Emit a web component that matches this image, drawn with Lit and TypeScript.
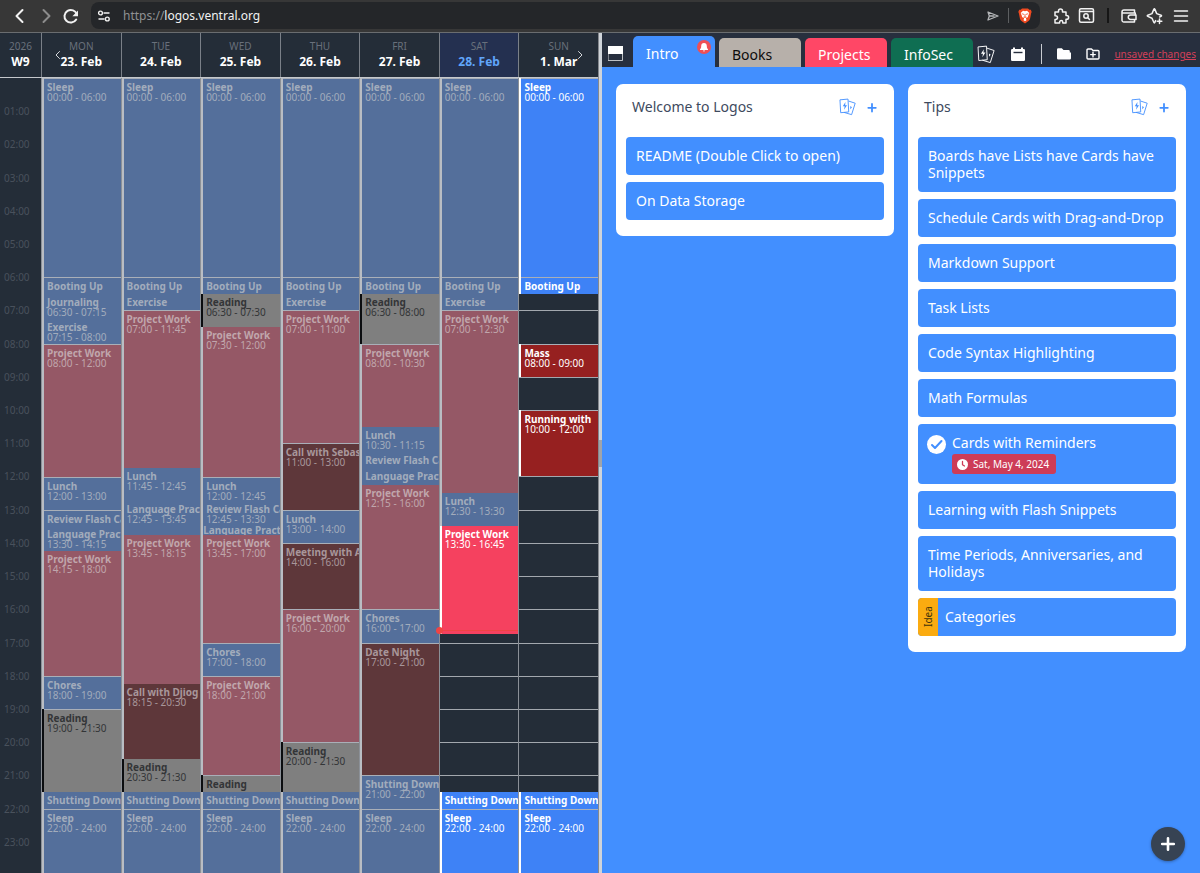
import { LitElement, html, css, svg, nothing } from "lit";
import { customElement, property, state } from "lit/decorators.js";
import { classMap } from "lit/directives/class-map.js";
import { styleMap } from "lit/directives/style-map.js";

type Kind = "routine" | "project" | "reading" | "social";

interface CalendarEvent {
  title: string;
  from: string;
  to: string;
  kind: Kind;
  upcoming?: boolean;
}

interface Day {
  weekday: string;
  date: string;
  today?: boolean;
  events: CalendarEvent[];
}

interface Card {
  title: string;
  reminder?: string;
  category?: string;
}

const ev = (title: string, from: string, to: string, kind: Kind = "routine", upcoming = false): CalendarEvent => ({
  title,
  from,
  to,
  kind,
  upcoming,
});

const WEEK: Day[] = [
  {
    weekday: "MON",
    date: "23. Feb",
    events: [
      ev("Sleep", "00:00", "06:00"),
      ev("Booting Up", "06:00", "06:30"),
      ev("Journaling", "06:30", "07:15"),
      ev("Exercise", "07:15", "08:00"),
      ev("Project Work", "08:00", "12:00", "project"),
      ev("Lunch", "12:00", "13:00"),
      ev("Review Flash Cards", "13:00", "13:30"),
      ev("Language Practice", "13:30", "14:15"),
      ev("Project Work", "14:15", "18:00", "project"),
      ev("Chores", "18:00", "19:00"),
      ev("Reading", "19:00", "21:30", "reading"),
      ev("Shutting Down", "21:30", "22:00"),
      ev("Sleep", "22:00", "24:00"),
    ],
  },
  {
    weekday: "TUE",
    date: "24. Feb",
    events: [
      ev("Sleep", "00:00", "06:00"),
      ev("Booting Up", "06:00", "06:30"),
      ev("Exercise", "06:30", "07:00"),
      ev("Project Work", "07:00", "11:45", "project"),
      ev("Lunch", "11:45", "12:45"),
      ev("Language Practice", "12:45", "13:45"),
      ev("Project Work", "13:45", "18:15", "project"),
      ev("Call with Djiog", "18:15", "20:30", "social"),
      ev("Reading", "20:30", "21:30", "reading"),
      ev("Shutting Down", "21:30", "22:00"),
      ev("Sleep", "22:00", "24:00"),
    ],
  },
  {
    weekday: "WED",
    date: "25. Feb",
    events: [
      ev("Sleep", "00:00", "06:00"),
      ev("Booting Up", "06:00", "06:30"),
      ev("Reading", "06:30", "07:30", "reading"),
      ev("Project Work", "07:30", "12:00", "project"),
      ev("Lunch", "12:00", "12:45"),
      ev("Review Flash Cards", "12:45", "13:30"),
      ev("Language Practice", "13:30", "13:45"),
      ev("Project Work", "13:45", "17:00", "project"),
      ev("Chores", "17:00", "18:00"),
      ev("Project Work", "18:00", "21:00", "project"),
      ev("Reading", "21:00", "21:30", "reading"),
      ev("Shutting Down", "21:30", "22:00"),
      ev("Sleep", "22:00", "24:00"),
    ],
  },
  {
    weekday: "THU",
    date: "26. Feb",
    events: [
      ev("Sleep", "00:00", "06:00"),
      ev("Booting Up", "06:00", "06:30"),
      ev("Exercise", "06:30", "07:00"),
      ev("Project Work", "07:00", "11:00", "project"),
      ev("Call with Sebas", "11:00", "13:00", "social"),
      ev("Lunch", "13:00", "14:00"),
      ev("Meeting with A", "14:00", "16:00", "social"),
      ev("Project Work", "16:00", "20:00", "project"),
      ev("Reading", "20:00", "21:30", "reading"),
      ev("Shutting Down", "21:30", "22:00"),
      ev("Sleep", "22:00", "24:00"),
    ],
  },
  {
    weekday: "FRI",
    date: "27. Feb",
    events: [
      ev("Sleep", "00:00", "06:00"),
      ev("Booting Up", "06:00", "06:30"),
      ev("Reading", "06:30", "08:00", "reading"),
      ev("Project Work", "08:00", "10:30", "project"),
      ev("Lunch", "10:30", "11:15"),
      ev("Review Flash Cards", "11:15", "11:45"),
      ev("Language Practice", "11:45", "12:15"),
      ev("Project Work", "12:15", "16:00", "project"),
      ev("Chores", "16:00", "17:00"),
      ev("Date Night", "17:00", "21:00", "social"),
      ev("Shutting Down", "21:00", "22:00"),
      ev("Sleep", "22:00", "24:00"),
    ],
  },
  {
    weekday: "SAT",
    date: "28. Feb",
    today: true,
    events: [
      ev("Sleep", "00:00", "06:00"),
      ev("Booting Up", "06:00", "06:30"),
      ev("Exercise", "06:30", "07:00"),
      ev("Project Work", "07:00", "12:30", "project"),
      ev("Lunch", "12:30", "13:30"),
      ev("Project Work", "13:30", "16:45", "project", true),
      ev("Shutting Down", "21:30", "22:00", "routine", true),
      ev("Sleep", "22:00", "24:00", "routine", true),
    ],
  },
  {
    weekday: "SUN",
    date: "1. Mar",
    events: [
      ev("Sleep", "00:00", "06:00", "routine", true),
      ev("Booting Up", "06:00", "06:30", "routine", true),
      ev("Mass", "08:00", "09:00", "social", true),
      ev("Running with", "10:00", "12:00", "social", true),
      ev("Shutting Down", "21:30", "22:00", "routine", true),
      ev("Sleep", "22:00", "24:00", "routine", true),
    ],
  },
];

const LISTS: { title: string; cards: Card[] }[] = [
  {
    title: "Welcome to Logos",
    cards: [{ title: "README (Double Click to open)" }, { title: "On Data Storage" }],
  },
  {
    title: "Tips",
    cards: [
      { title: "Boards have Lists have Cards have Snippets" },
      { title: "Schedule Cards with Drag-and-Drop" },
      { title: "Markdown Support" },
      { title: "Task Lists" },
      { title: "Code Syntax Highlighting" },
      { title: "Math Formulas" },
      { title: "Cards with Reminders", reminder: "Sat, May 4, 2024" },
      { title: "Learning with Flash Snippets" },
      { title: "Time Periods, Anniversaries, and Holidays" },
      { title: "Categories", category: "Idea" },
    ],
  },
];

/** Index of the quarter-hour grid line for a "HH:MM" time. */
const quarterLine = (time: string): number => {
  const [h, m] = time.split(":").map(Number);
  return h * 4 + m / 15 + 1;
};

const flashCards = svg`
  <path d="M1.5 2l8.500-.8.8 14.300-8.500.8z"/>
  <path d="M11 3.500l7 2.300-4 12.700-8-2.400"/>
  <path class="solid" d="M7.200 4.400L4.200 9.300h2.100l-.7 3.700 3.300-5H6.800z"/>
  <path class="solid" d="M12.600 9l1.800 1.200-1.800 2.200z"/>`;

const reset = css`
  * {
    box-sizing: border-box;
  }
  button,
  input {
    font: inherit;
    color: inherit;
    background: none;
    border: 0;
    margin: 0;
    padding: 0;
  }
  button {
    display: flex;
    align-items: center;
    justify-content: center;
    cursor: pointer;
  }
  svg {
    display: block;
    fill: none;
    stroke: currentColor;
    stroke-linecap: round;
    stroke-linejoin: round;
  }
  .solid {
    fill: currentColor;
    stroke: none;
  }
`;

@customElement("browser-bar")
class BrowserBar extends LitElement {
  static styles = [
    reset,
    css`
      :host {
        display: grid;
        grid-template-columns: auto minmax(0, 1fr) auto;
        align-items: center;
        padding: 2px 10px 4px 10px;
        background: #373737;
        border-bottom: 1px solid #6a6d70;
        color: #f2f2f2;
      }
      .nav {
        display: flex;
        gap: 6px;
        margin-right: 11px;
      }
      .nav svg {
        stroke-width: 2;
      }
      .dim {
        color: #8c8c8c;
      }
      .address {
        display: flex;
        align-items: center;
        height: 27px;
        padding: 0 8px 0 5px;
        border-radius: 8px;
        background: #242629;
        font-size: 12px;
      }
      .address label {
        margin-left: 11px;
        color: #8f9193;
      }
      .address input {
        flex: 1;
        min-width: 0;
        outline: none;
      }
      .share {
        color: #b4b6b8;
      }
      .rule {
        width: 1px;
        height: 15px;
        margin: 0 9px 0 8px;
        background: #5d5f61;
      }
      .tools {
        display: flex;
        align-items: center;
        gap: 8px;
        margin-left: 12px;
      }
      .tools .rule {
        width: 2px;
        margin: 0 3px 0 4px;
        background: #161616;
      }
      .tools svg {
        stroke-width: 1.5;
      }
    `,
  ];

  render() {
    return html`
      <div class="nav">
        <button aria-label="Back">
          <svg width="20" height="20" viewBox="0 0 20 20"><path d="M12.5 4L6.500 10l6 6" /></svg>
        </button>
        <button class="dim" aria-label="Forward">
          <svg width="20" height="20" viewBox="0 0 20 20"><path d="M7.500 4l6 6-6 6" /></svg>
        </button>
        <button aria-label="Reload">
          <svg width="18" height="18" viewBox="0 0 18 18">
            <path d="M14.800 7.500A6.300 6.300 0 1 0 14.200 12.500" />
            <path class="solid" d="M16 3.500v5.800h-5.600z" />
          </svg>
        </button>
      </div>
      <div class="address">
        <button aria-label="Site settings">
          <svg width="16" height="16" viewBox="0 0 16 16" stroke-width="1.400">
            <circle cx="4.500" cy="5" r="1.900" /><path d="M8 5h5M3 11h5" /><circle cx="11.300" cy="11" r="1.900" />
          </svg>
        </button>
        <label for="url">https://</label>
        <input id="url" type="text" .value=${"logos.ventral.org"} />
        <button aria-label="Share" class="share">
          <svg width="14" height="14" viewBox="0 0 14 14" stroke-width="1.300">
            <path d="M2 3l10 4-10 4 1.300-4zM3.300 7H8" />
          </svg>
        </button>
        <span class="rule"></span>
        <button aria-label="Shields">
          <svg width="14" height="16" viewBox="0 0 14 16">
            <path
              fill="#f04a20"
              stroke="none"
              d="M4 .5h6l1.300 1.300 1.500-.1.900 2.200-.5 1.200L12 11c-.3 1-1 1.600-1.800 2.200L7 15.500l-3.200-2.300C3 12.600 2.300 12 2 11L.8 5.100.3 3.900l.9-2.200 1.500.1z"
            />
            <path
              fill="#fff"
              stroke="none"
              d="M7 3.200l2-.5L11.300 5l-1.200 3-.1 1-2 1.200v1l.7.700L7 13.200l-1.700-1.300.7-.7v-1L4 9l-.1-1-1.200-3L5 2.700z"
            />
            <path stroke="#f04a20" stroke-width=".8" d="M4.200 5.800l1.800.6M9.800 5.800L8 6.400M7 7v2.200M5.800 9.200h2.400" />
          </svg>
        </button>
      </div>
      <div class="tools">
        <button aria-label="Extensions">
          <svg width="18" height="18" viewBox="0 0 18 18">
            <path
              d="M3 5h3.500V4a2 2 0 0 1 4 0v1H14v3.500h.7a1.900 1.900 0 0 1 0 3.800H14V16h-3.200v-.8a1.600 1.600 0 0 0-3.200 0v.8H3v-3.500h.6a1.900 1.900 0 0 0 0-3.800H3z"
            />
          </svg>
        </button>
        <button aria-label="Search tabs">
          <svg width="17" height="17" viewBox="0 0 17 17">
            <rect x="1.500" y="1.800" width="14" height="13.400" rx="1.500" />
            <path d="M2 4.500h13" /><circle cx="8" cy="9" r="2.200" /><path d="M9.800 10.800l1.700 1.700" />
          </svg>
        </button>
        <span class="rule"></span>
        <button aria-label="Wallet">
          <svg width="18" height="18" viewBox="0 0 18 18">
            <path d="M14.500 6V3H4a2 2 0 0 0-2 2v8.500A1.700 1.700 0 0 0 3.700 15h10.800v-2M2.500 6h12.800v2" />
            <path d="M10.500 8H16v4.500h-5.500a2.200 2.200 0 0 1 0-4.500z" />
          </svg>
        </button>
        <button aria-label="Assistant">
          <svg width="18" height="18" viewBox="0 0 18 18">
            <path
              d="M13.600 10l1.400-.6c.7-.3.700-.8 0-1.100L10.700 6.600 8.900 2.400c-.3-.8-.8-.8-1.100 0L6 6.600 1.800 8.300c-.7.300-.7.800 0 1.100L6 11.200l1.800 4.100c.3.800.8.800 1.100 0l.7-1.700M13.500 12v4.500M11.300 14.200h4.500"
            />
          </svg>
        </button>
        <button aria-label="Menu">
          <svg width="18" height="18" viewBox="0 0 18 18"><path d="M2.500 4h13M2.500 9h13M2.500 14h13" /></svg>
        </button>
      </div>
    `;
  }
}

@customElement("week-calendar")
class WeekCalendar extends LitElement {
  @property({ attribute: false }) days: Day[] = [];
  @property() now = "16:30";

  static styles = [
    reset,
    css`
      :host {
        display: block;
        position: relative;
        min-width: 0;
        overflow: hidden;
        background: #242d38;
        font-size: 10px;
      }
      .week {
        display: grid;
        grid-template-columns: 41px repeat(7, minmax(0, 1fr));
      }
      .head {
        border-bottom: 1px solid #c5c8cc;
      }
      .head > div {
        display: flex;
        flex-direction: column;
        align-items: center;
        height: 44px;
        padding-top: 6px;
        border-left: 1px solid #7a8088;
        line-height: 15px;
        color: #69707b;
      }
      .head > div:first-child {
        border-left: 0;
      }
      .head strong {
        font-size: 12px;
        line-height: 15px;
        color: #fff;
      }
      .head .today {
        background: #243050;
      }
      .head .today strong {
        color: #60a5fa;
      }
      .step {
        position: absolute;
        top: 14px;
        width: 16px;
        height: 16px;
        color: #d5d8dc;
      }
      .prev {
        left: 50px;
      }
      .next {
        right: 10px;
      }
      .body {
        height: calc(100vh - 76px);
      }
      .axis,
      .day,
      .lines {
        display: grid;
        min-height: 0;
        grid-template-rows: repeat(96, minmax(0, 1fr));
      }
      .axis span {
        align-self: center;
        padding-left: 4px;
        line-height: 12px;
        color: #49515c;
      }
      .day {
        grid-template-columns: minmax(0, 1fr);
        border-left: 1px solid #8b9097;
      }
      .lines {
        grid-area: 1 / 1 / -1 / -1;
        grid-template-rows: repeat(24, minmax(0, 1fr));
      }
      .lines i {
        box-shadow: inset 0 1px #a3a8ae;
      }
      .lines i:first-child {
        box-shadow: none;
      }
      .event {
        grid-column: 1;
        min-height: 0;
        overflow: hidden;
        padding: 3px 0 0 3px;
        border-left: 2px solid #b9bdc3;
        line-height: 10px;
        white-space: nowrap;
        color: #a2acbc;
      }
      .event b,
      .event time {
        display: block;
      }
      .on-hour {
        padding-top: 4px;
        box-shadow: inset 0 1px #a9afb8;
      }
      .tiny {
        padding: 0;
        line-height: 8px;
      }
      .routine {
        background: #546f9b;
      }
      .project {
        background: #955866;
        color: #c0a6ac;
      }
      .social {
        background: #5e373a;
        color: #a8969a;
      }
      .reading {
        background: #7f7f7f;
        border-color: #0b0d10;
        color: #333537;
      }
      .upcoming {
        border-color: #fff;
        color: #fff;
      }
      .upcoming.routine {
        background: #3e82f6;
      }
      .upcoming.project {
        background: #f5415f;
      }
      .upcoming.social {
        background: #962020;
      }
      .now {
        grid-column: 1;
        align-self: center;
        position: relative;
        height: 1px;
        background: #ef4444;
      }
      .now::before {
        content: "";
        position: absolute;
        left: -4px;
        top: -3px;
        width: 7px;
        height: 7px;
        border-radius: 50%;
        background: #ef4444;
      }
    `,
  ];

  private renderEvent(e: CalendarEvent) {
    const start = quarterLine(e.from);
    const end = quarterLine(e.to);
    const length = end - start;
    const classes = {
      event: true,
      [e.kind]: true,
      upcoming: !!e.upcoming,
      "on-hour": e.from.endsWith(":00"),
      tiny: length === 1,
    };
    return html`<div class=${classMap(classes)} style=${styleMap({ gridRow: `${start} / ${end}` })}>
      <b>${e.title}</b>
      ${length > 2 ? html`<time>${e.from} - ${e.to}</time>` : nothing}
    </div>`;
  }

  render() {
    const hours = Array.from({ length: 24 }, (_, h) => h);
    return html`
      <div class="week head">
        <div><span>2026</span><strong>W9</strong></div>
        ${this.days.map(
          (d) => html`<div class=${classMap({ today: !!d.today })}>
            <span>${d.weekday}</span><strong>${d.date}</strong>
          </div>`
        )}
      </div>
      <button class="step prev" aria-label="Previous week">
        <svg width="8" height="10" viewBox="0 0 8 10"><path d="M5.500 1.500L2 5l3.500 3.500" /></svg>
      </button>
      <button class="step next" aria-label="Next week">
        <svg width="8" height="10" viewBox="0 0 8 10"><path d="M2.500 1.500L6 5 2.500 8.500" /></svg>
      </button>
      <div class="week body">
        <div class="axis">
          ${hours.slice(1).map(
            (h) => html`<span style=${styleMap({ gridRow: `${h * 4 - 1} / ${h * 4 + 3}` })}
              >${String(h).padStart(2, "0")}:00</span
            >`
          )}
        </div>
        ${this.days.map(
          (d) => html`<div class="day">
            <div class="lines">${hours.map(() => html`<i></i>`)}</div>
            ${d.events.map((e) => this.renderEvent(e))}
            ${d.today
              ? html`<div class="now" style=${styleMap({ gridRow: String(quarterLine(this.now)) })}></div>`
              : nothing}
          </div>`
        )}
      </div>
    `;
  }
}

@customElement("board-list")
class BoardList extends LitElement {
  @property() heading = "";
  @property({ attribute: false }) cards: Card[] = [];

  static styles = [
    reset,
    css`
      :host {
        display: block;
        flex: 1 1 0;
        min-width: 0;
        padding: 10px 10px 16px;
        border-radius: 7px;
        background: #fff;
      }
      header {
        display: flex;
        align-items: center;
        height: 26px;
        padding: 0 6px;
        margin-bottom: 17px;
        color: #428fff;
      }
      h2 {
        flex: 1;
        margin: 0;
        font-size: 14px;
        font-weight: 400;
        line-height: 20px;
        color: #3e4a5e;
      }
      header button + button {
        margin-left: 9px;
      }
      .cards {
        display: flex;
        flex-direction: column;
        gap: 7px;
        margin: 0;
        padding: 0;
        list-style: none;
      }
      .card {
        display: flex;
        border-radius: 4px;
        overflow: hidden;
        background: #428fff;
        color: #fff;
        font-size: 14px;
        line-height: 17px;
      }
      .content {
        flex: 1;
        padding: 10px 10px 11px;
      }
      .tag {
        display: flex;
        align-items: center;
        justify-content: center;
        width: 20px;
        writing-mode: vertical-rl;
        transform: rotate(180deg);
        background: #fbab10;
        color: #42330c;
        font-size: 10px;
      }
      .tag + .content {
        padding-left: 7px;
      }
      .check {
        display: grid;
        align-self: flex-start;
        margin: 11px 0 0 9px;
      }
      .check > * {
        grid-area: 1 / 1;
      }
      .check input {
        appearance: none;
        width: 19px;
        height: 19px;
        border-radius: 50%;
        background: #fff;
      }
      .check svg {
        stroke: #428fff;
        stroke-width: 2;
        pointer-events: none;
      }
      .check + .content {
        padding-left: 6px;
        padding-bottom: 10px;
      }
      .due {
        display: flex;
        align-items: center;
        gap: 5px;
        width: fit-content;
        height: 20px;
        margin-top: 3px;
        padding: 0 7px 0 5px;
        border-radius: 3px;
        background: #cd3c57;
        font-size: 10px;
      }
    `,
  ];

  private renderCard(card: Card) {
    return html`<li class="card">
      ${card.category ? html`<span class="tag">${card.category}</span>` : nothing}
      ${card.reminder
        ? html`<span class="check">
            <input type="checkbox" checked aria-label=${card.title} />
            <svg width="19" height="19" viewBox="0 0 19 19"><path d="M5 10l3 3 6.500-7" /></svg>
          </span>`
        : nothing}
      <div class="content">
        ${card.title}
        ${card.reminder
          ? html`<time class="due">
              <svg width="11" height="11" viewBox="0 0 11 11">
                <circle class="solid" cx="5.500" cy="5.500" r="5.500" />
                <path stroke="#cd3c57" stroke-width="1.300" d="M5.500 2.500v3.200l2 1.300" />
              </svg>
              ${card.reminder}
            </time>`
          : nothing}
      </div>
    </li>`;
  }

  render() {
    return html`
      <header>
        <h2>${this.heading}</h2>
        <button aria-label="Review flash snippets">
          <svg width="18" height="18" viewBox="0 0 20 20">${flashCards}</svg>
        </button>
        <button aria-label="Add card">
          <svg width="12" height="12" viewBox="0 0 12 12" stroke-width="1.800"><path d="M6 3v7.500M2.300 6.800h7.500" /></svg>
        </button>
      </header>
      <ul class="cards">
        ${this.cards.map((c) => this.renderCard(c))}
      </ul>
    `;
  }
}

@customElement("logos-board")
class LogosBoard extends LitElement {
  @state() private active = "Intro";

  static styles = [
    reset,
    css`
      :host {
        display: flex;
        flex-direction: column;
        position: relative;
        min-width: 0;
        overflow: hidden;
        background: #428fff;
      }
      .bar {
        display: flex;
        align-items: center;
        height: 34px;
        padding-left: 6px;
        background: #272f3e;
        color: #fff;
      }
      .layout {
        margin: 7px 10px 0 0;
      }
      .tabs {
        display: flex;
        align-items: flex-end;
        align-self: stretch;
        gap: 4px;
      }
      .tab {
        position: relative;
        justify-content: flex-start;
        width: 82px;
        height: 29px;
        padding: 3px 0 0 13px;
        border-radius: 5px 5px 0 0;
        font-size: 14px;
      }
      .intro {
        background: #428fff;
      }
      .active {
        height: 31px;
      }
      .books {
        background: #b7b0aa;
        color: #0c0c0c;
      }
      .projects {
        background: #ff4766;
      }
      .infosec {
        background: #0f6e52;
      }
      .bell {
        position: absolute;
        top: 4px;
        right: 4px;
        display: grid;
        place-items: center;
        width: 14px;
        height: 14px;
        border-radius: 50%;
        background: #f04f55;
      }
      .actions {
        display: flex;
        flex: 1;
        align-items: center;
        justify-content: space-between;
        margin: 8px 4px 0 4px;
      }
      .sep {
        width: 1px;
        height: 20px;
        background: #c9ccd1;
      }
      .status {
        font-size: 10px;
        line-height: 14px;
        white-space: nowrap;
        color: #d3405a;
      }
      .lists {
        display: flex;
        align-items: flex-start;
        gap: 14px;
        padding: 17px 14px;
      }
      .add {
        position: absolute;
        right: 15px;
        bottom: 12px;
        width: 34px;
        height: 34px;
        border-radius: 50%;
        background: #374353;
        color: #fff;
        box-shadow: 0 1px 3px rgba(0, 0, 0, 0.3);
      }
    `,
  ];

  render() {
    const tabs = ["Intro", "Books", "Projects", "InfoSec"];
    return html`
      <div class="bar">
        <button class="layout" aria-label="Toggle layout">
          <svg width="15" height="15" viewBox="0 0 15 15">
            <path d="M.5.5h14v14H.5z" stroke-opacity=".7" /><path class="solid" d="M0 0h15v8H0z" />
          </svg>
        </button>
        <nav class="tabs">
          ${tabs.map(
            (t) => html`<button
              class=${classMap({ tab: true, [t.toLowerCase()]: true, active: t === this.active })}
              @click=${() => (this.active = t)}
            >
              ${t}
              ${t === "Intro"
                ? html`<span class="bell">
                    <svg width="8" height="9" viewBox="0 0 8 9">
                      <path
                        class="solid"
                        d="M4 0c1.800 0 2.800 1.300 2.800 3 0 2 .5 2.500 1.200 3.200v.8H0v-.8C.7 5.500 1.200 5 1.200 3 1.200 1.300 2.200 0 4 0zM3 7.600h2a1 1 0 0 1-2 0z"
                      />
                    </svg>
                  </span>`
                : nothing}
            </button>`
          )}
        </nav>
        <div class="actions">
          <button aria-label="Flash snippets">
            <svg width="19" height="19" viewBox="0 0 20 20">${flashCards}</svg>
          </button>
          <button aria-label="Calendar">
            <svg width="16" height="16" viewBox="0 0 16 16">
              <path
                class="solid"
                d="M3 1.500h2V3h6V1.500h2V3h.8A1.200 1.200 0 0 1 15 4.200v9.600a1.200 1.200 0 0 1-1.200 1.200H2.200A1.200 1.200 0 0 1 1 13.800V4.200A1.200 1.200 0 0 1 2.200 3H3z"
              />
              <path stroke="#272f3e" stroke-width="1.400" stroke-linecap="butt" d="M3.500 6.500h9" />
            </svg>
          </button>
          <span class="sep"></span>
          <button aria-label="Open folder">
            <svg width="16" height="14" viewBox="0 0 16 14">
              <path
                class="solid"
                d="M1 2.500A1.300 1.300 0 0 1 2.300 1.200h3.500L7.500 3h5A1.300 1.300 0 0 1 13.800 4.300V5.500H15v5.700a1.300 1.300 0 0 1-1.300 1.300H2.300A1.300 1.300 0 0 1 1 11.200z"
              />
            </svg>
          </button>
          <button aria-label="New folder">
            <svg width="14" height="14" viewBox="0 0 14 14" stroke-width="1.400">
              <path
                d="M1 3a1 1 0 0 1 1-1h3.500L7 3.500h5a1 1 0 0 1 1 1V11a1 1 0 0 1-1 1H2a1 1 0 0 1-1-1zM7 5.300v4.600M4.700 7.600h4.600"
              />
            </svg>
          </button>
          <a class="status" href="#save">unsaved changes</a>
        </div>
      </div>
      <div class="lists">
        ${LISTS.map((l) => html`<board-list .heading=${l.title} .cards=${l.cards}></board-list>`)}
      </div>
      <button class="add" aria-label="Add">
        <svg width="16" height="16" viewBox="0 0 16 16" stroke-width="2.600"><path d="M8 2.200v11.600M2.200 8h11.600" /></svg>
      </button>
    `;
  }
}

@customElement("app-root")
class AppRoot extends LitElement {
  static styles = css`
    :host {
      display: grid;
      grid-template-rows: 33px minmax(0, 1fr);
      height: 100vh;
      overflow: hidden;
      font-family: "Noto Sans", "Open Sans", sans-serif;
    }
    .workspace {
      display: grid;
      grid-template-columns: minmax(0, 1fr) 4px minmax(0, 1fr);
      min-height: 0;
    }
    .splitter {
      display: grid;
      align-items: center;
      border-left: 1px solid #85888e;
      background: #cfd4da;
    }
    .grip {
      height: 27px;
      background: #a0a4aa;
    }
  `;

  render() {
    return html`
      <browser-bar></browser-bar>
      <div class="workspace">
        <week-calendar .days=${WEEK}></week-calendar>
        <div class="splitter"><span class="grip"></span></div>
        <logos-board></logos-board>
      </div>
    `;
  }
}
